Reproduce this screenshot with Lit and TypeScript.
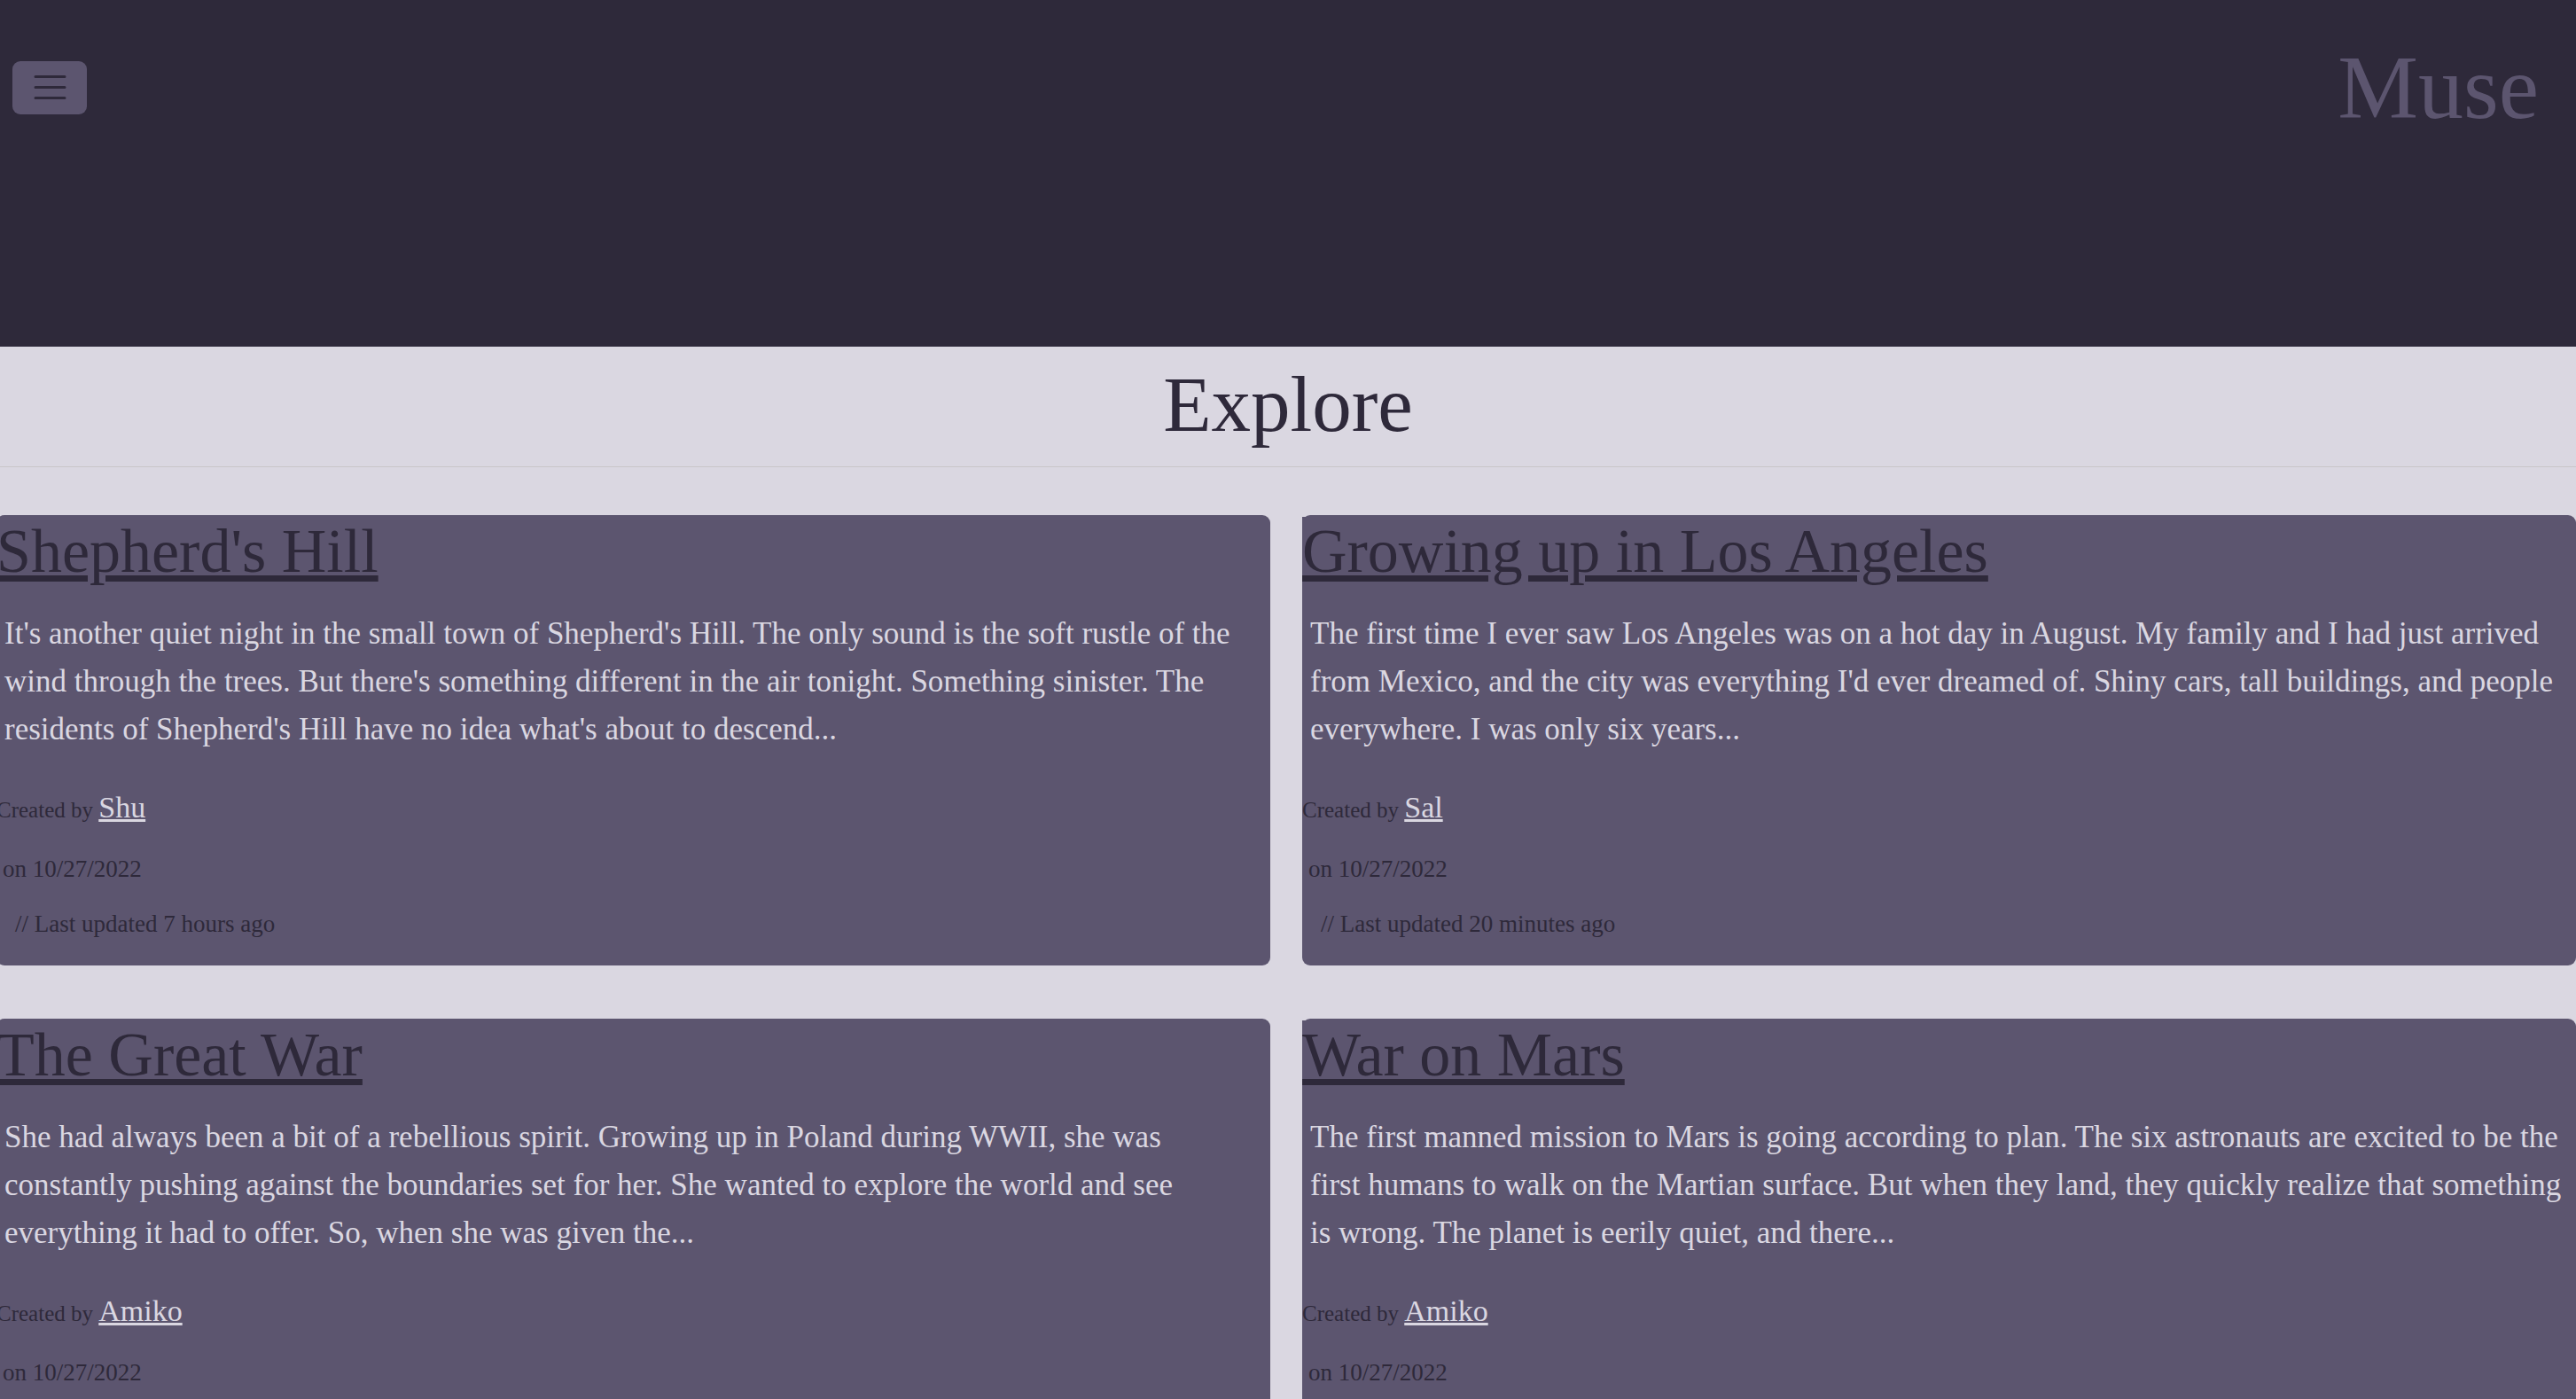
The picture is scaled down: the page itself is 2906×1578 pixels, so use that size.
import { LitElement, html, css } from "lit";
import { customElement, property } from "lit/decorators.js";

interface Story {
  title: string;
  excerpt: string;
  author: string;
  created: string;
  updated: string;
}

const STORIES: Story[] = [
  {
    title: "Shepherd's Hill",
    excerpt:
      "It's another quiet night in the small town of Shepherd's Hill. The only sound is the soft rustle of the wind through the trees. But there's something different in the air tonight. Something sinister. The residents of Shepherd's Hill have no idea what's about to descend...",
    author: "Shu",
    created: "10/27/2022",
    updated: "7 hours ago",
  },
  {
    title: "Growing up in Los Angeles",
    excerpt:
      "The first time I ever saw Los Angeles was on a hot day in August. My family and I had just arrived from Mexico, and the city was everything I'd ever dreamed of. Shiny cars, tall buildings, and people everywhere. I was only six years...",
    author: "Sal",
    created: "10/27/2022",
    updated: "20 minutes ago",
  },
  {
    title: "The Great War",
    excerpt:
      "She had always been a bit of a rebellious spirit. Growing up in Poland during WWII, she was constantly pushing against the boundaries set for her. She wanted to explore the world and see everything it had to offer. So, when she was given the...",
    author: "Amiko",
    created: "10/27/2022",
    updated: "7 hours ago",
  },
  {
    title: "War on Mars",
    excerpt:
      "The first manned mission to Mars is going according to plan. The six astronauts are excited to be the first humans to walk on the Martian surface. But when they land, they quickly realize that something is wrong. The planet is eerily quiet, and there...",
    author: "Amiko",
    created: "10/27/2022",
    updated: "7 hours ago",
  },
];

@customElement("story-card")
export class StoryCard extends LitElement {
  static styles = css`
    :host {
      display: block;
      box-sizing: border-box;
      padding: 2px 0 27px;
      border-radius: 9px;
      background: #5c556f;
      color: #2e293a;
    }
    .title {
      margin: 0;
      border-top-right-radius: 9px;
      font-size: 70px;
      font-weight: 400;
      line-height: 78px;
      background: #5c556f;
    }
    .title-link {
      color: inherit;
      text-decoration-line: underline;
      text-decoration-thickness: 7px;
      text-underline-offset: 4px;
    }
    .excerpt {
      margin: 27px 9px 34px;
      font-size: 35px;
      line-height: 54px;
      color: #dad7e1;
    }
    .byline {
      margin: 0;
      font-size: 34px;
      line-height: 54px;
    }
    .byline-label {
      font-size: 25px;
      line-height: 40px;
    }
    .author {
      color: #dad7e1;
      text-decoration-thickness: 3px;
      text-underline-offset: 2px;
    }
    .date {
      margin: 22px 0 0;
      padding-left: 7px;
      font-size: 27px;
      line-height: 40px;
    }
    .updated {
      padding-left: 21px;
    }
  `;

  @property({ attribute: false }) story!: Story;

  render() {
    const { title, excerpt, author, created, updated } = this.story;
    return html`
      <h2 class="title"><a class="title-link" href="#story">${title}</a></h2>
      <p class="excerpt">${excerpt}</p>
      <p class="byline"><span class="byline-label">Created by </span><a class="author" href="#author">${author}</a></p>
      <p class="date">on ${created}</p>
      <p class="date updated">// Last updated ${updated}</p>
    `;
  }
}

@customElement("app-root")
export class AppRoot extends LitElement {
  static styles = css`
    :host {
      display: block;
      height: 100vh;
      overflow: hidden auto;
      scrollbar-width: none;
      background: #dad7e1;
      color: #2e293a;
      font-family: "Liberation Serif", "Times New Roman", serif;
    }
    .header {
      display: flex;
      justify-content: space-between;
      align-items: center;
      padding: 37px 42px 230px 14px;
      background: #2e293a;
    }
    .menu {
      display: flex;
      padding: 6px 18px;
      border: 0;
      border-radius: 9px;
      background: #5c556f;
      color: #2e293a;
      cursor: pointer;
    }
    .menu-icon {
      width: 48px;
      height: 48px;
    }
    .brand {
      font-size: 102px;
      line-height: 124px;
      color: #5c556f;
      text-decoration: none;
    }
    .heading {
      margin: 0;
      padding-bottom: 5px;
      border-bottom: 1px solid #c9c6c9;
      font-size: 89px;
      font-weight: 400;
      line-height: 130px;
      text-align: center;
    }
    .grid {
      display: grid;
      grid-template-columns: 1fr 1fr;
      gap: 60px 36px;
      margin: 54px 0 60px -4px;
    }
  `;

  render() {
    return html`
      <header class="header">
        <button class="menu" type="button" aria-label="Menu">
          <svg
            class="menu-icon"
            viewBox="0 0 48 48"
            fill="none"
            stroke="currentColor"
            stroke-width="3"
            stroke-linecap="round"
            aria-hidden="true"
          >
            <path d="M8 11.5H41M8 23.5H41M8 35.5H41" />
          </svg>
        </button>
        <a class="brand" href="#home">Muse</a>
      </header>
      <main>
        <h1 class="heading">Explore</h1>
        <div class="grid">
          ${STORIES.map((story) => html`<story-card .story=${story}></story-card>`)}
        </div>
      </main>
    `;
  }
}
